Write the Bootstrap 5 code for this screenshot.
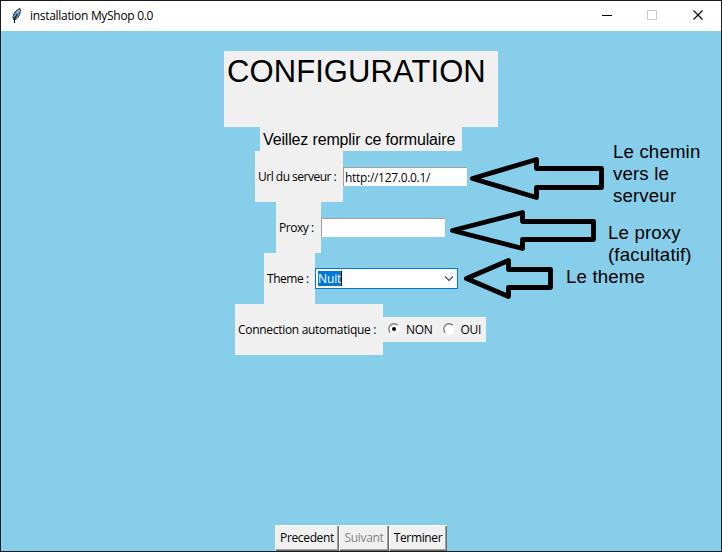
<!DOCTYPE html>
<html lang="fr">
<head>
<meta charset="utf-8">
<meta name="viewport" content="width=device-width, initial-scale=1">
<title>installation MyShop 0.0</title>
<link href="https://cdn.jsdelivr.net/npm/bootstrap@5.3.0/dist/css/bootstrap.min.css" rel="stylesheet">
<style>
body{font-family:"Open Sans","Noto Sans",sans-serif;font-size:12px;line-height:16px;color:#000}
.app-window{width:722px;height:552px;border:1px solid #1c1c1f;background:#87ceeb}
.titlebar{height:30px;padding-left:8px;background:#fff}
.caption{margin-left:7px;letter-spacing:-.3px}
.win-ctl{width:46px;height:30px}
.face{background:#f0f0f0}
.arial{font-family:"Liberation Sans",Arial,sans-serif}
.heading{width:274px;height:76px;margin-top:20px;padding:2px 3px 0;font-size:31px;line-height:38px;font-weight:400;letter-spacing:.08px}
.subtitle{width:202px;height:24px;padding:0 3px;font-size:16px;line-height:25px;letter-spacing:-.15px}
.field-row{height:51px}
.odd-width{padding-right:1px}
.lbl{height:51px;padding:0 3px;letter-spacing:-.3px}
.w-url{width:88px;letter-spacing:-.5px}.w-proxy{width:45px;letter-spacing:-.45px}.w-theme{width:51px;letter-spacing:-.45px}.w-auto-login{width:148px}
.entry{width:124px;height:19px;padding:0 1px;border:0;border-top:1px solid #a0a0a0;border-left:1px solid #a0a0a0;background:#fff;border-radius:0;font-size:12px;line-height:16px;color:#000;outline:0;letter-spacing:-.3px}
.combo{width:143px;height:21px;border:1px solid #0078d7;background:#fff;padding:0 3px 0 2px}
.picked{height:15px;line-height:15px;background:#0078d7;color:#fff;border-right:1px solid #000;letter-spacing:-.1px}
.radios{width:103px;height:25px;padding-left:5px}
.radio-dot{margin-bottom:2px}
.radio-text{margin-left:6px;letter-spacing:-.3px}
.radio-gap{margin-left:10px}
.tkbtn{height:26px;border:0;border-radius:0;background:#f0f0f0;padding:0 0 1px;font-size:12px;line-height:16px;color:#000;letter-spacing:-.35px;box-shadow:inset 1px 1px #fff,inset -1px -1px #696969,inset -2px -2px #a0a0a0}
.tkbtn:disabled{color:#838383;opacity:1;background:#f0f0f0}
.b-prev{width:64px}.b-next{width:50px}.b-end{width:58px}
.notes{left:0;top:0;width:720px;height:550px;pointer-events:none}
.note{font-size:18.67px;line-height:22px;letter-spacing:.15px}
.note-url{left:612px;top:140px}.note-proxy{left:607px;top:221px}.note-theme{left:565px;top:265px}
</style>
</head>
<body class="m-0 overflow-hidden">
<main class="app-window position-relative d-flex flex-column">
  <header class="titlebar d-flex align-items-center flex-shrink-0">
    <svg width="14" height="18" viewBox="0 0 14 18"><path d="M4.500 12.500C3 9 5.500 3.500 11 1.500C12.300 5 10 10.500 6.500 12.500Z" fill="#5b93d3" stroke="#26323e" stroke-width="1"/><path d="M10.300 3L6.500 9.500" stroke="#b8d8f5" stroke-width="1.100"/><path d="M8.500 6.500L5.500 12L5.500 16" fill="none" stroke="#0b0b0b" stroke-width="1.100"/></svg>
    <span class="caption">installation MyShop 0.0</span>
    <div class="d-flex ms-auto">
      <svg class="win-ctl" viewBox="0 0 46 30"><path d="M19 14.500h10" stroke="#000"/></svg>
      <svg class="win-ctl" viewBox="0 0 46 30"><path d="M18.500 9.500h9v9h-9z" fill="none" stroke="#c9c9c9"/></svg>
      <svg class="win-ctl" viewBox="0 0 46 30"><path d="M18.500 9.500l9 9m0-9l-9 9" stroke="#000" stroke-width="1.100"/></svg>
    </div>
  </header>
  <form class="d-flex flex-column align-items-center flex-grow-1">
    <h1 class="heading face arial mb-0">CONFIGURATION</h1>
    <div class="subtitle face arial text-nowrap">Veillez remplir ce formulaire</div>
    <div class="field-row d-flex align-items-center">
      <label class="lbl w-url face d-flex align-items-center text-nowrap" for="url">Url du serveur :</label>
      <input id="url" class="entry" type="text" value="http://127.0.0.1/">
    </div>
    <div class="field-row odd-width d-flex align-items-center">
      <label class="lbl w-proxy face d-flex align-items-center text-nowrap" for="proxy">Proxy :</label>
      <input id="proxy" class="entry" type="text">
    </div>
    <div class="field-row d-flex align-items-center">
      <span class="lbl w-theme face d-flex align-items-center text-nowrap">Theme :</span>
      <div class="combo d-flex align-items-center justify-content-between">
        <span class="picked">Nuit</span>
        <svg width="10" height="7" viewBox="0 0 10 7"><path d="M1 1.500l4 4l4-4" fill="none" stroke="#444" stroke-width="1.100"/></svg>
      </div>
    </div>
    <div class="field-row odd-width d-flex align-items-center">
      <span class="lbl w-auto-login face d-flex align-items-center text-nowrap">Connection automatique :</span>
      <div class="radios face d-flex align-items-center">
        <svg class="radio-dot" width="12" height="12" viewBox="0 0 12 12"><circle cx="6" cy="6" r="5.500" fill="#fff"/><path d="M2.300 9.700A5.200 5.200 0 0 1 9.700 2.300" fill="none" stroke="#777" stroke-width="1.300"/><circle cx="6" cy="6" r="2" fill="#000"/></svg>
        <span class="radio-text">NON</span>
        <svg class="radio-dot radio-gap" width="12" height="12" viewBox="0 0 12 12"><circle cx="6" cy="6" r="5.500" fill="#fff"/><path d="M2.300 9.700A5.200 5.200 0 0 1 9.700 2.300" fill="none" stroke="#777" stroke-width="1.300"/></svg>
        <span class="radio-text">OUI</span>
      </div>
    </div>
    <div class="d-flex mt-auto">
      <button type="button" class="tkbtn b-prev">Precedent</button>
      <button type="button" class="tkbtn b-next" disabled>Suivant</button>
      <button type="button" class="tkbtn b-end">Terminer</button>
    </div>
  </form>
  <div class="notes position-absolute arial">
    <svg class="position-absolute top-0 start-0" width="720" height="550" viewBox="1 1 720 550" fill="none" stroke="#000" stroke-width="4.900" stroke-linejoin="round">
      <path d="M472.500 178.500L536.500 159.500V168.500H601.500V187.500H536.500V197.500Z"/>
      <path d="M452.500 230.500L522.500 212.500V221.500H593.500V239.500H522.500V248.500Z"/>
      <path d="M466.500 278.500L508.500 260.500V269.500H550.500V287.500H508.500V296.500Z"/>
    </svg>
    <div class="note note-url position-absolute text-nowrap">Le chemin<br>vers le<br>serveur</div>
    <div class="note note-proxy position-absolute text-nowrap">Le proxy<br>(facultatif)</div>
    <div class="note note-theme position-absolute text-nowrap">Le theme</div>
  </div>
</main>
<script src="https://cdn.jsdelivr.net/npm/bootstrap@5.3.0/dist/js/bootstrap.bundle.min.js"></script>
</body>
</html>
